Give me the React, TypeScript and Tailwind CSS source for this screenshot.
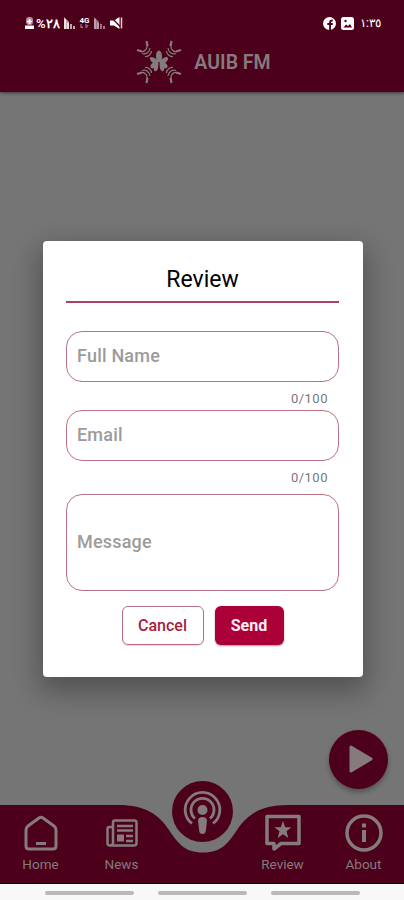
import { FormEvent, ReactNode, useState } from "react";

const INITIAL_DATA = {
  fullName: "",
  email: "",
  message: "",
};

// A hand shaped arm of the logo, repeated on the four diagonals
function LogoArm({ transform }: { transform: string }) {
  return (
    <g transform={transform} fill="none" stroke="currentColor" strokeWidth="1.2">
      <path d="M-19 -11 C-16 -9 -12 -12 -12 -15 V-19" />
      <path d="M-22 -12 L-17 -10.500 M-12.500 -21 L-11.500 -16" strokeWidth="2.2" />
      <path d="M-17 -8.500 C-13 -7 -9.500 -10 -9 -14" />
      <path d="M-14 -5.500 C-10.500 -5 -7.500 -8 -7.500 -11" />
    </g>
  );
}

function Logo() {
  return (
    <svg viewBox="-23 -22 46 44" className="h-11 w-[46px] text-[#857b7d]">
      <LogoArm transform="" />
      <LogoArm transform="scale(-1 1)" />
      <LogoArm transform="scale(1 -1)" />
      <LogoArm transform="scale(-1 -1)" />
      <g fill="currentColor">
        <ellipse cx="0" cy="-5.500" rx="3" ry="6" />
        <ellipse cx="-4.500" cy="-1" rx="2.600" ry="5.500" transform="rotate(-52 -4.500 -1)" />
        <ellipse cx="4.500" cy="-1" rx="2.600" ry="5.500" transform="rotate(52 4.500 -1)" />
        <ellipse cx="-4.500" cy="3" rx="2.600" ry="4.500" transform="rotate(55 -4.500 3)" />
        <ellipse cx="4.500" cy="3" rx="2.600" ry="4.500" transform="rotate(-55 4.500 3)" />
        <ellipse cx="-2.600" cy="5" rx="2" ry="4.500" transform="rotate(18 -2.600 5)" />
        <ellipse cx="2.600" cy="5" rx="2" ry="4.500" transform="rotate(-18 2.600 5)" />
      </g>
      <path d="M0 0 V9" stroke="#4d001b" strokeWidth="1.2" />
    </svg>
  );
}

function SignalIcon() {
  return (
    <svg viewBox="0 0 11 12" className="h-3 w-[11px]">
      <path d="M0 0 L5 5 V12 H0Z" fill="#c9a9b2" />
      <path d="M1 2 V12 M4 6 V12 M7 7 V12 M10 9 V12" stroke="#fff" strokeWidth="1.3" />
    </svg>
  );
}

function StatusBar() {
  return (
    <div className="flex h-[46px] items-center justify-between pr-[23px] pl-[25px] text-white">
      <div className="flex items-center">
        <svg viewBox="0 0 9 12" className="h-3 w-[9px]">
          <rect x="1" y="0" width="7" height="8" rx="3" fill="#b98a97" />
          <path d="M0 8.500 H9 V12 H0Z" fill="#fff" />
          <path d="M4.500 2 V7 M2 4.500 H7" stroke="#fff" strokeWidth="1.7" />
        </svg>
        <span dir="ltr" className="ml-0.5 w-[23px] text-[13px] leading-none font-semibold whitespace-nowrap">%٢٨</span>
        <span className="ml-[5px]"><SignalIcon /></span>
        <span className="ml-1 flex w-[11px] flex-col items-center text-[8px] leading-[7px] font-bold">
          4G
          <svg viewBox="0 0 9 5" className="h-[5px] w-[9px]">
            <path d="M1 0 V4 M3 4 L1 2 M6 0 V4 M8 1 L6 4" stroke="#9d6b7b" strokeWidth="1.300" />
          </svg>
        </span>
        <span className="ml-1 opacity-70"><SignalIcon /></span>
        <svg viewBox="0 0 13 12" className="ml-[5px] h-3 w-[13px]">
          <path d="M0 3.500 H4 L9.500 0 V12 L4 8.500 H0Z" fill="#fff" />
          <path d="M1 0 L12 11.500" stroke="#4d001b" strokeWidth="1.3" />
          <path d="M11.500 0.500 V11.500" stroke="#e5c9d0" strokeWidth="1.500" />
        </svg>
      </div>
      <div className="flex items-center">
        <svg viewBox="0 0 12 12" className="size-[13px]">
          <circle cx="6" cy="6" r="6" fill="#fff" />
          <path d="M6.500 12 V5 Q6.500 3 9 3.300 M4 6.500 H9" stroke="#4d001b" strokeWidth="1.700" fill="none" />
        </svg>
        <svg viewBox="0 0 13 13" className="ml-[5px] size-[13px]">
          <rect width="13" height="13" rx="2.500" fill="#fff" />
          <path d="M2.500 10.500 L5 7.500 L7 9 L9 7 L11 10.500Z" fill="#4d001b" />
          <circle cx="4.500" cy="4" r="1.200" fill="#4d001b" />
        </svg>
        <span dir="ltr" className="ml-1.5 w-[21px] text-[12px] leading-none whitespace-nowrap">١:٣٥</span>
      </div>
    </div>
  );
}

function Header() {
  return (
    <header className="z-10 h-[92px] shrink-0 bg-[#4d001b] shadow-[0_1px_3px_rgba(0,0,0,0.5)]">
      <StatusBar />
      <div className="-mt-1.5 flex h-11 items-center justify-center gap-3 pl-[3px]">
        <Logo />
        <h1 className="pt-0.5 text-[19.5px] font-semibold text-[#857b7d]">AUIB FM</h1>
      </div>
    </header>
  );
}

type FieldProps = {
  name: string;
  label: string;
  value: string;
  onChange: (value: string) => void;
};

function Field({ name, label, value, onChange }: FieldProps) {
  return (
    <label className="block">
      <input
        name={name}
        maxLength={100}
        placeholder={label}
        value={value}
        onChange={(e) => onChange(e.target.value)}
        className="block h-[51px] w-full rounded-[16px] border border-[#bb7185] px-2.5 pb-0.5 text-[18px] font-medium tracking-[0.2px] placeholder:text-[#9b9b9b]"
      />
      <span className="block h-7 pt-[7px] pr-[11px] text-right text-[13px] leading-5 tracking-[0.5px] text-[#777]">
        {value.length}/100
      </span>
    </label>
  );
}

function ReviewDialog() {
  const [data, setData] = useState(INITIAL_DATA);

  function updateFields(fields: Partial<typeof INITIAL_DATA>) {
    setData((prev) => ({ ...prev, ...fields }));
  }

  function onSubmit(e: FormEvent) {
    e.preventDefault();
  }

  return (
    <form
      onSubmit={onSubmit}
      className="absolute top-[241px] left-[42.5px] z-20 h-[435.5px] w-[320px] rounded-[4px] bg-white px-[23.5px] shadow-[0_11px_28px_4px_rgba(0,0,0,0.3)]"
    >
      <h2 className="h-[62px] border-b-2 border-[#a94260] pt-[23px] text-center text-[23px] leading-8 text-black">
        Review
      </h2>
      <div className="pt-7">
        <Field name="fullName" label="Full Name" value={data.fullName} onChange={(fullName) => updateFields({ fullName })} />
        <Field name="email" label="Email" value={data.email} onChange={(email) => updateFields({ email })} />
        <textarea
          name="message"
          placeholder="Message"
          value={data.message}
          onChange={(e) => updateFields({ message: e.target.value })}
          className="mt-[5px] block h-[97px] w-full resize-none rounded-[16px] border border-[#bb7185] px-2.5 pt-[35px] text-[18px] leading-6 font-medium tracking-[0.2px] placeholder:text-[#9b9b9b]"
        />
      </div>
      <div className="mt-[15px] flex justify-center gap-[11px]">
        <button type="button" className="h-[39px] w-[82px] rounded-[6px] border border-[#b96f83] text-[16px] font-medium text-[#a51c3c] shadow-[0_1px_1px_rgba(0,0,0,0.15)]">
          Cancel
        </button>
        <button type="submit" className="h-[39px] w-[69px] rounded-[6px] bg-[#ab0038] text-[16px] font-bold text-[#fff0f2] shadow-[0_1px_2px_rgba(0,0,0,0.4)]">
          Send
        </button>
      </div>
    </form>
  );
}

function HomeIcon() {
  return (
    <svg viewBox="0 0 34 36" className="h-9 w-[34px]" fill="none" stroke="currentColor" strokeWidth="3" strokeLinejoin="round" strokeLinecap="round">
      <path d="M15 3 Q17 1.500 19 3 L30 11 Q32 12.500 32 15 V31 Q32 34 29 34 H5 Q2 34 2 31 V15 Q2 12.500 4 11 Z" />
      <path d="M12 28.500 H22" strokeLinecap="butt" />
    </svg>
  );
}

function NewsIcon() {
  return (
    <svg viewBox="0 0 32 28" className="h-7 w-8" fill="none" stroke="currentColor" strokeWidth="2.500">
      <path d="M7 8 H3.500 Q1.500 8 1.500 10 V24 Q1.500 26.500 4 26.500 H28 Q30.500 26.500 30.500 24 V3.500 Q30.500 1.500 28.500 1.500 H9 Q7 1.500 7 3.500 V24 Q7 26.500 4 26.500" />
      <path d="M11 7 H27 M11 11.500 H27 M20 17 H27 M20 22 H27" strokeWidth="2.3" />
      <path d="M11 15.500 H18 V22.500 H11Z" fill="currentColor" stroke="none" />
    </svg>
  );
}

function ReviewIcon() {
  return (
    <svg viewBox="0 0 38 38" className="size-[38px]">
      <path d="M3 2.500 H35 V29.500 H17 L10 35 V29.500 H3Z" fill="none" stroke="currentColor" strokeWidth="3.500" strokeLinejoin="round" />
      <path d="M19 7 L21.200 13.300 H27.500 L22.500 17.300 L24.300 24 L19 20.200 L13.700 24 L15.500 17.300 L10.500 13.300 H16.800Z" fill="currentColor" />
    </svg>
  );
}

function AboutIcon() {
  return (
    <svg viewBox="0 0 38 38" className="size-[38px]" stroke="currentColor">
      <circle cx="19" cy="19" r="17" fill="none" strokeWidth="3.500" />
      <path d="M19 9.500 V13.500 M19 16 V28" strokeWidth="4" />
    </svg>
  );
}

function NavItem({ icon, label }: { icon: ReactNode; label: string }) {
  return (
    <button className="flex w-[81px] flex-col items-center text-[#857b7d]">
      <span className="flex h-[51px] items-center pt-[5px]">{icon}</span>
      <span className="text-[13.5px] leading-4">{label}</span>
    </button>
  );
}

function BottomNav() {
  return (
    <nav className="relative flex h-[79px] shrink-0 justify-between border-b border-black bg-[#4d001b]">
      <NavItem icon={<HomeIcon />} label="Home" />
      <NavItem icon={<NewsIcon />} label="News" />
      {/* notch under the podcast button */}
      <svg viewBox="0 0 170 50" className="absolute -top-px left-[118px] h-[50px] w-[170px]">
        <path d="M0 0 V1 C28 1 41 11 51 26 C60 39 66 48.500 85 48.500 C104 48.500 110 39 119 26 C129 11 142 1 170 1 V0Z" fill="#757575" />
      </svg>
      <button aria-label="Podcast" className="absolute -top-6 left-[172px] size-[61px] rounded-full bg-[#4d001b] text-[#857b7d]">
        <svg viewBox="0 0 61 61" className="size-[61px]" fill="none" stroke="currentColor" strokeWidth="2.8">
          <path d="M20 42.500 A17.300 17.300 0 1 1 41 42.500" />
          <path d="M23 37.500 A11.500 11.500 0 1 1 38 37.500" />
          <circle cx="30.500" cy="29" r="5" fill="currentColor" stroke="none" />
          <path d="M26 40 Q26 36 30.500 36 Q35 36 35 40 L33.800 50 Q33.500 53 30.500 53 Q27.500 53 27.200 50Z" fill="currentColor" stroke="none" />
        </svg>
      </button>
      <div className="grow" />
      <NavItem icon={<ReviewIcon />} label="Review" />
      <NavItem icon={<AboutIcon />} label="About" />
    </nav>
  );
}

function App() {
  return (
    <div className="relative flex h-[900px] w-[404px] flex-col overflow-hidden bg-[#757575] font-['Roboto','Noto_Sans',sans-serif]">
      <Header />
      <main className="flex grow items-end justify-end pr-4 pb-[16.5px]">
        <button aria-label="Play" className="flex size-[59px] items-center justify-center rounded-full bg-[#4d001b] text-[#857b7d] shadow-[0_3px_5px_rgba(0,0,0,0.3)]">
          <svg viewBox="0 0 24 28" className="ml-1 h-7 w-6">
            <path d="M2 2 L22 14 L2 26Z" fill="currentColor" stroke="currentColor" strokeWidth="3" strokeLinejoin="round" />
          </svg>
        </button>
      </main>
      <BottomNav />
      <div className="flex h-4 shrink-0 justify-center gap-6 bg-[#f8f8f8] pt-[7px]">
        <div className="h-1 w-[89px] rounded-full bg-[#b9b9b9]" />
        <div className="h-1 w-[89px] rounded-full bg-[#b9b9b9]" />
        <div className="h-1 w-[89px] rounded-full bg-[#b9b9b9]" />
      </div>
      <ReviewDialog />
    </div>
  );
}

export default App;
